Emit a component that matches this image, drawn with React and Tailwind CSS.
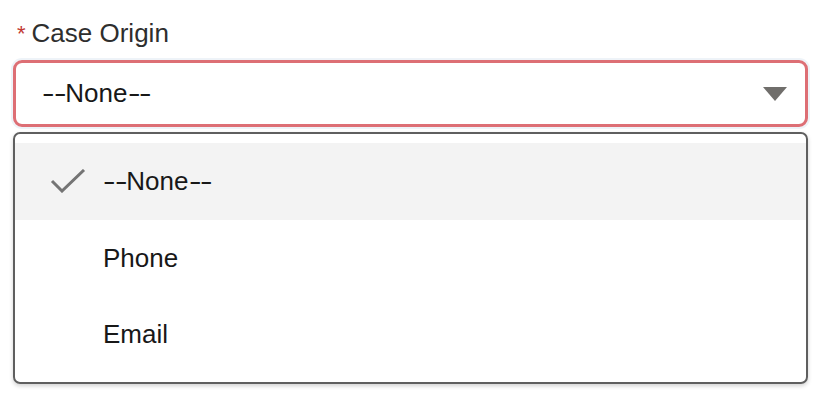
import React from 'react';

const font = { fontFamily: '"Liberation Sans", Arial, sans-serif' };

// hyphens in the original face are longer than Arial's
const Dash = () => (
  <span className="inline-block scale-x-[1.45] origin-left mr-[3px]">-</span>
);

const NoneText = () => (
  <>
    <Dash /><Dash />None<Dash /><Dash />
  </>
);

const options = [
  { label: 'None', selected: true },
  { label: 'Phone' },
  { label: 'Email' },
];

const App = () => {
  return (
    <div className="w-[823px] h-[396px] bg-white flex flex-col pt-[18px] pl-[13px] pr-[15px]" style={font}>
      {/* Label */}
      <div className="flex items-start h-[30px] pl-[4px]">
        <span className="text-[#c23934] text-[22px] leading-none mt-[5px] mr-[6px]">*</span>
        <span className="text-[26px] leading-[30px] text-[#2e2e2e]">Case Origin</span>
      </div>

      {/* Select trigger */}
      <div className="mt-[12px] h-[67px] border-[3px] border-[#dd6f75] rounded-[9px] shadow-[0_0_0_2px_#eef3f8] flex items-center justify-between pl-[26px] pr-[18px]">
        <span className="text-[26px] text-[#181818]"><NoneText /></span>
        <svg width="24" height="14" viewBox="0 0 24 14">
          <path d="M0 0 H24 L12 14 Z" fill="#706e6b" />
        </svg>
      </div>

      {/* Dropdown */}
      <div className="mt-[5px] h-[252px] border-[2px] border-[#5f5f5f] rounded-[7px] shadow-[0_2px_4px_rgba(0,0,0,0.18)] py-[9px] flex flex-col">
        {options.map((opt) => (
          <div
            key={opt.label}
            className={`h-[77px] flex items-center pl-[35px] ${opt.selected ? 'bg-[#f3f3f3]' : ''}`}
          >
            <div className="w-[53px] h-[24px] flex items-center">
              {opt.selected && (
                <svg width="36" height="24" viewBox="0 0 36 24">
                  <path d="M2 12 L12 22 L34 1" fill="none" stroke="#747474" strokeWidth="3" />
                </svg>
              )}
            </div>
            <span className="text-[26px] text-[#181818]">
              {opt.label === 'None' ? <NoneText /> : opt.label}
            </span>
          </div>
        ))}
      </div>
    </div>
  );
};

export default App;
